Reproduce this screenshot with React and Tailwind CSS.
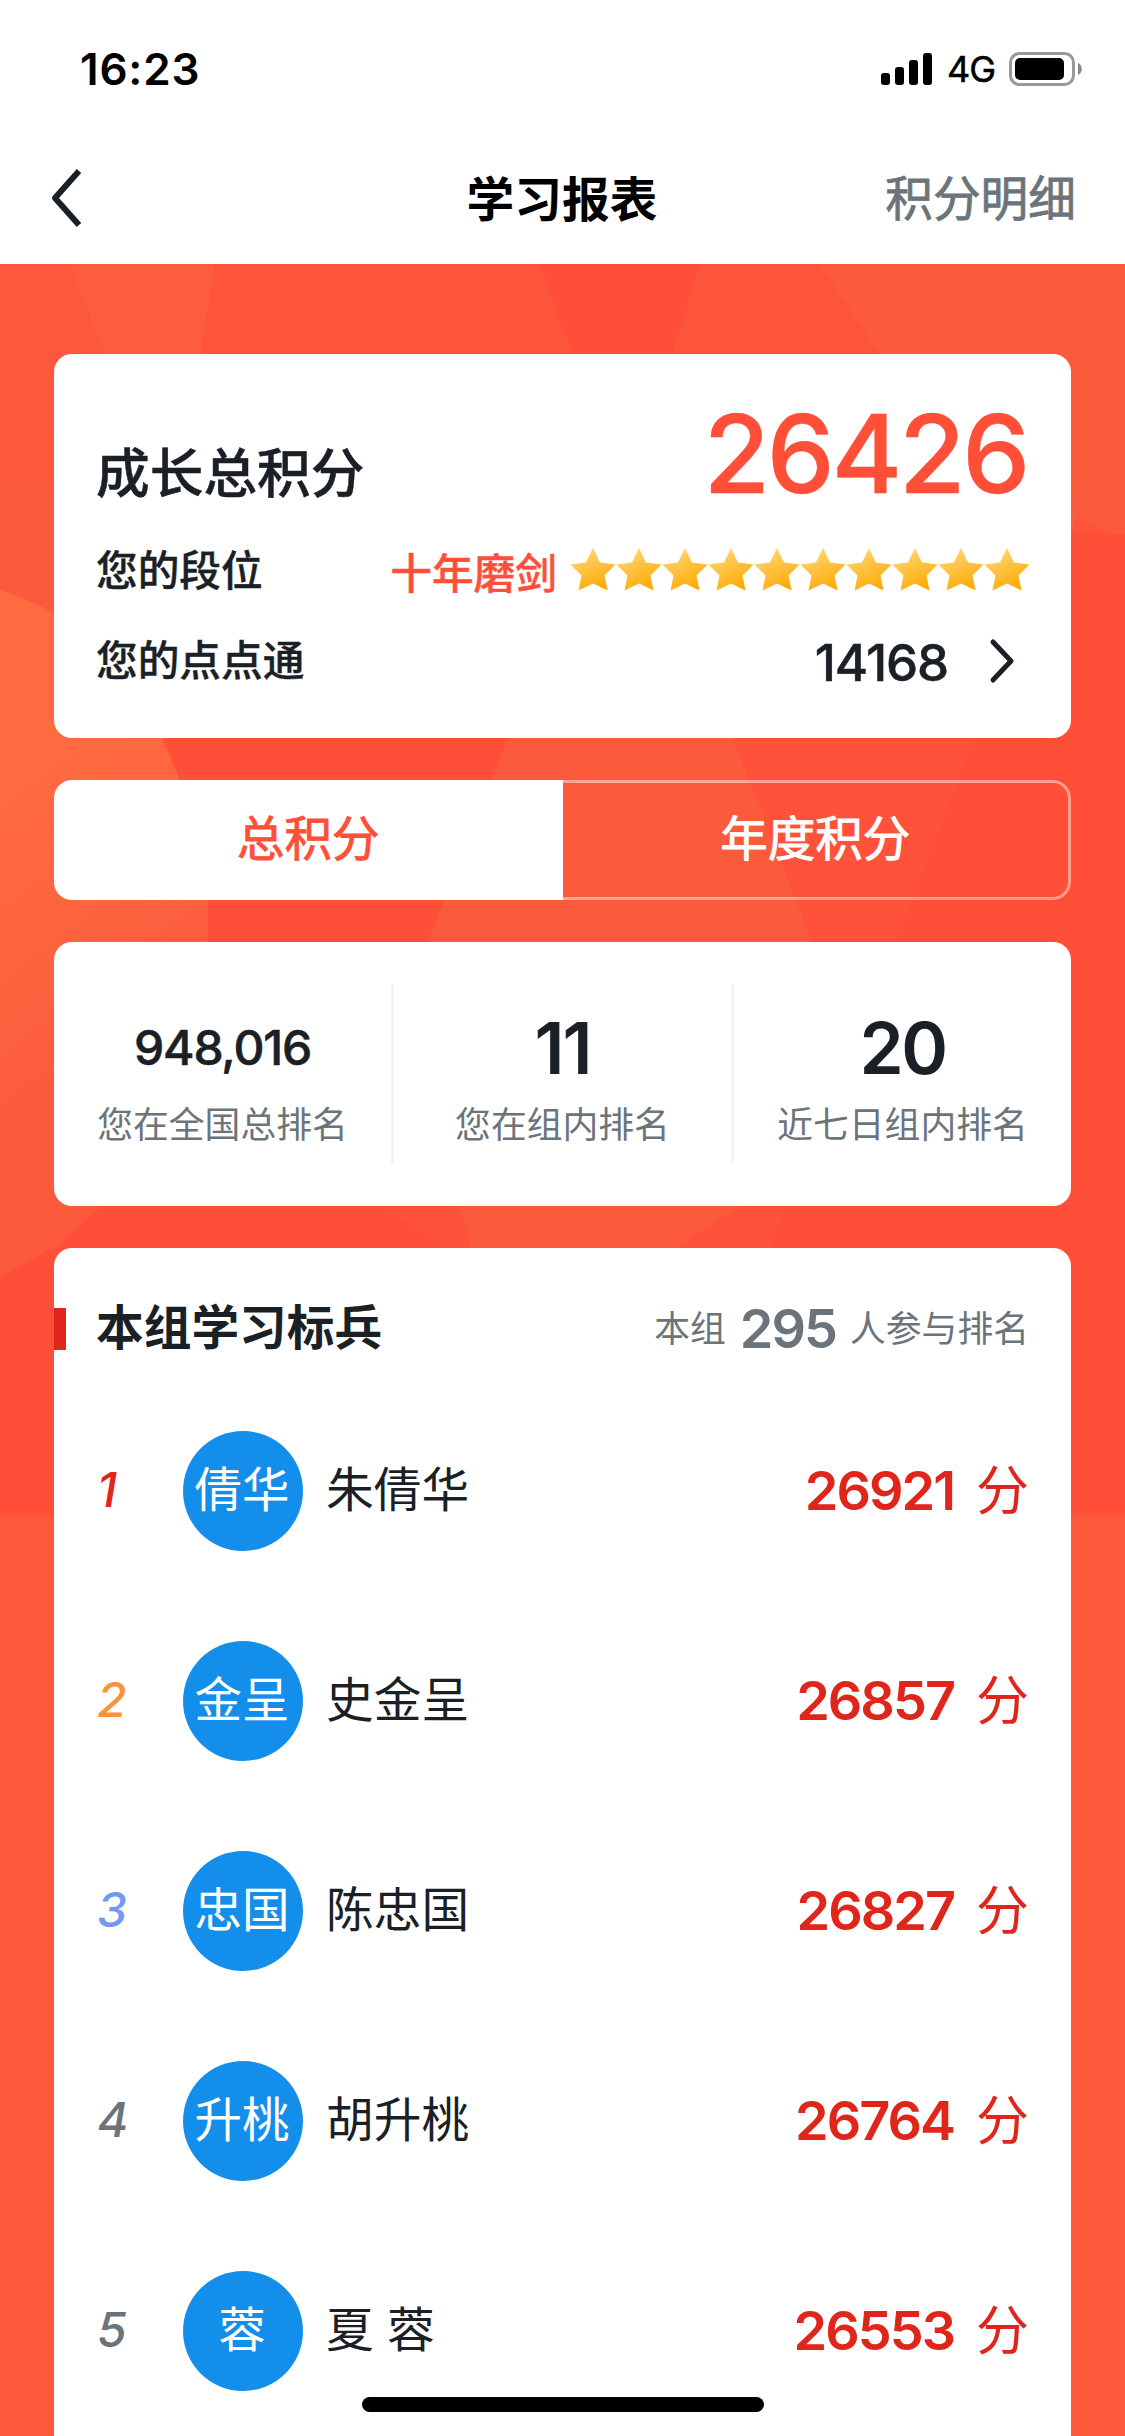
import React from "react";

const FONT = "font-['Inter','Noto_Sans_CJK_SC',sans-serif]";

const people = [
  { rank: 1, color: "text-[#e0251b]", short: "倩华", name: "朱倩华", score: "26921" },
  { rank: 2, color: "text-[#fb9438]", short: "金呈", name: "史金呈", score: "26857" },
  { rank: 3, color: "text-[#7399f2]", short: "忠国", name: "陈忠国", score: "26827" },
  { rank: 4, color: "text-[#6b747b]", short: "升桃", name: "胡升桃", score: "26764" },
  { rank: 5, color: "text-[#6b747b]", short: "蓉", name: "夏 蓉", score: "26553" },
];

const stats = [
  { value: "948,016", label: "您在全国总排名", size: "text-[48px] font-medium tracking-[-1.2px] [-webkit-text-stroke:0.6px]" },
  { value: "11", label: "您在组内排名", size: "text-[71px] font-semibold tracking-[-2px]" },
  { value: "20", label: "近七日组内排名", size: "text-[71px] font-semibold tracking-[-2.5px]" },
];

function StatusBar() {
  return (
    <div className="flex h-[132px] items-center justify-between pl-[80px] pr-[43px] pt-[6px] text-black">
      <div className="text-[44px] font-semibold leading-[52px] tracking-[0.8px]">16:23</div>
      <div className="flex items-center">
        <svg width="52" height="33" viewBox="0 0 52 33">
          <rect x="0" y="20" width="9" height="12" rx="3" />
          <rect x="14" y="14" width="9" height="18" rx="3" />
          <rect x="28" y="7" width="9" height="25" rx="3" />
          <rect x="42" y="0" width="9" height="32" rx="3" />
        </svg>
        <span className="ml-[14px] text-[36px] leading-[40px] tracking-[-1px] [-webkit-text-stroke:0.5px]">4G</span>
        <svg className="ml-[14px]" width="73" height="34" viewBox="0 0 73 34">
          <rect x="1.5" y="1.5" width="63" height="31" rx="9" fill="none" stroke="#999" strokeWidth="3" />
          <rect x="6" y="6" width="49" height="22" rx="5" />
          <path d="M69 11c5 2 5 10 0 12z" fill="#888" />
        </svg>
      </div>
    </div>
  );
}

function NavBar() {
  return (
    <div className="grid h-[132px] grid-cols-3 items-center pl-[48px] pr-[49px]">
      <svg width="34" height="60" viewBox="0 0 34 60" fill="none" stroke="#1b1f26" strokeWidth="6" strokeLinejoin="round">
        <path d="M31 3L7 30L31 57" />
      </svg>
      <h1 className="pt-[3px] text-center text-[47.7px] font-bold leading-[60px] text-black">学习报表</h1>
      <div className="pt-[2px] text-right text-[47.7px] leading-[60px] text-[#6b747b] [-webkit-text-stroke:0.8px]">积分明细</div>
    </div>
  );
}

function Star() {
  return (
    <svg width="46" height="44" viewBox="0 0 46 44">
      <path d="M23 0L30 14.500L45.500 16.500L34.500 27.500L37.500 42.500L23 35.500L8.500 42.500L11.500 27.500L.5 16.500L16 14.500Z" fill="url(#gold)" />
    </svg>
  );
}

function Backdrop() {
  return (
    <svg className="absolute inset-0" width="1125" height="2172" viewBox="0 264 1125 2172" preserveAspectRatio="none">
      <defs>
        <linearGradient id="gold" x1="0.2" y1="0" x2="0.7" y2="1">
          <stop offset="0" stopColor="#ffd97c" />
          <stop offset="1" stopColor="#ffa800" />
        </linearGradient>
        <linearGradient id="edge" gradientUnits="userSpaceOnUse" x1="0" y1="780" x2="170" y2="1000">
          <stop offset="0" stopColor="#ff6a40" />
          <stop offset="0.5" stopColor="#fe653f" />
          <stop offset="1" stopColor="#fb5b3c" />
        </linearGradient>
        <linearGradient id="side" x1="0" y1="0" x2="0" y2="1">
          <stop offset="0" stopColor="#fe573b" />
          <stop offset="1" stopColor="#fa5c3d" />
        </linearGradient>
      </defs>
      <rect y="264" width="1125" height="1251" fill="#ff4f38" />
      <rect y="1515" width="1125" height="921" fill="#ff573a" />
      <path d="M200 264H540L572 354L560 500L200 500Z" fill="#fe543a" />
      <path d="M0 264H120V700H0Z" fill="url(#side)" />
      <path d="M700 264L672 354L800 500L1071 534H1125V264Z" fill="#fd543a" />
      <path d="M70 264H215L200 354V480H150L105 354Z" fill="#fc5d3d" />
      <path d="M820 264H1125V380L1071 534L880 354Z" fill="#fc5c3c" />
      <path d="M1125 380L1071 510Q1095 532 1125 534Z" fill="#fb5a3c" />
      <path d="M733 738H975L895 942H812Z" fill="#fe523a" />
      <path d="M508 738H733L812 942H428Z" fill="#fb5a3c" />
      <path d="M383 1206H783L770 1250H450Z" fill="#fd533a" />
      <path d="M460 1206H740L672 1250H472Z" fill="#fb5a3c" />
      <path d="M0 590Q40 602 80 630L162 738L180 780L208 880V1000L100 1206L60 1244L0 1277Z" fill="url(#edge)" />
    </svg>
  );
}

function TotalCard() {
  return (
    <section className="h-[384px] rounded-[18px] bg-white px-[42px] pt-[44px] text-[#1b1f26]">
      <div className="flex h-[128px] items-start justify-between">
        <div className="pt-[43px] text-[53.7px] font-medium leading-[66px] [-webkit-text-stroke:0.5px]">成长总积分</div>
        <div className="mr-[2px] text-[108px] font-medium leading-[112px] tracking-[-3.3px] text-[#ff4f38] [-webkit-text-stroke:0.4px]">26426</div>
      </div>
      <div className="flex h-[90px] items-center justify-between">
        <div className="text-[41.7px] font-medium leading-[50px] [-webkit-text-stroke:0.4px]">您的段位</div>
        <div className="flex items-center">
          <span className="pt-[6px] text-[41.7px] font-medium leading-[50px] text-[#ff4f38] [-webkit-text-stroke:0.4px]">十年磨剑</span>
          <span className="-mt-[2px] ml-[13px] mr-[-1px] flex">
            {Array.from({ length: 10 }, (_, i) => <Star key={i} />)}
          </span>
        </div>
      </div>
      <div className="flex h-[90px] items-center justify-between">
        <div className="text-[41.7px] font-medium leading-[50px] [-webkit-text-stroke:0.4px]">您的点点通</div>
        <div className="flex items-center">
          <span className="pt-[4px] text-[51px] font-medium leading-[56px] tracking-[-1.1px] [-webkit-text-stroke:0.5px]">14168</span>
          <svg className="ml-[40px] mr-[13px]" width="28" height="46" viewBox="0 0 28 46" fill="none" stroke="#1b1f26" strokeWidth="5" strokeLinecap="round" strokeLinejoin="round">
            <path d="M5 4L23 23L5 42" />
          </svg>
        </div>
      </div>
    </section>
  );
}

function Tabs() {
  return (
    <div className="mt-[42px] grid h-[120px] grid-cols-2 overflow-hidden rounded-[18px] text-[47.5px] leading-[60px] [-webkit-text-stroke:0.9px]">
      <div className="flex items-center justify-center bg-white pb-[3px] text-[#ff4f38]">总积分</div>
      <div className="flex items-center justify-center rounded-r-[18px] border-[3px] border-l-0 border-white/45 pb-[3px] text-white">年度积分</div>
    </div>
  );
}

function Stats() {
  return (
    <section className="mt-[42px] grid h-[264px] grid-cols-[340px_340px_337px] items-center rounded-[18px] bg-white">
      {stats.map((s, i) => (
        <div key={s.label} className={"flex h-[180px] flex-col items-center text-[#1b1f26] " + (i < 2 ? "border-r-[3px] border-[#f2f3f4]" : "")}>
          <div className={"flex h-[116px] items-start pt-[21px] leading-[86px] " + s.size}>{s.value}</div>
          <div className="text-[35.8px] leading-[50px] text-[#6b747b]">{s.label}</div>
        </div>
      ))}
    </section>
  );
}

function Row({ p }) {
  return (
    <li className="flex h-[210px] items-start px-[42px]">
      <div className="flex h-[120px] w-full items-center">
        <div className={"w-[87px] pb-[2px] pl-[1px] text-[48px] font-medium italic leading-[60px] " + p.color}>{p.rank}</div>
        <div className="flex h-[120px] w-[120px] items-center justify-center rounded-full bg-[#148eeb] pb-[3px] pr-[2px] text-[47.5px] leading-[60px] text-white">{p.short}</div>
        <div className="ml-[23px] flex-1 pb-[3px] text-[47.7px] leading-[60px] text-[#1b1f26]">{p.name}</div>
        <div className="flex items-center text-[#e0251b]">
          <span className="text-[54px] font-semibold leading-[60px] tracking-[-2px]">{p.score}</span>
          <span className="ml-[22px] text-[53px] leading-[60px]">分</span>
        </div>
      </div>
    </li>
  );
}

function Leaders() {
  return (
    <section className="mt-[42px] h-[1188px] overflow-hidden rounded-t-[18px] bg-white">
      <div className="flex h-[183px] items-start pt-[48px]">
        <div className="mt-[12px] h-[42px] w-[12px] bg-[#e0251b]" />
        <h2 className="ml-[30px] flex-1 pt-[1px] text-[47.7px] font-bold leading-[62px] text-[#1b1f26]">本组学习标兵</h2>
        <div className="flex items-center pr-[42px] pt-[2px] text-[35.8px] leading-[62px] text-[#6b747b]">
          <span>本组</span>
          <span className="mx-[14px] text-[54px] font-semibold tracking-[-2px]">295</span>
          <span>人参与排名</span>
        </div>
      </div>
      <ul>
        {people.map((p) => <Row key={p.rank} p={p} />)}
      </ul>
    </section>
  );
}

export default function App() {
  return (
    <div className={"relative h-[2436px] w-[1125px] overflow-hidden bg-white " + FONT}>
      <StatusBar />
      <NavBar />
      <main className="relative h-[2172px] overflow-hidden bg-[#ff573a]">
        <Backdrop />
        <div className="relative px-[54px] pt-[90px]">
          <TotalCard />
          <Tabs />
          <Stats />
          <Leaders />
        </div>
      </main>
      <div className="absolute bottom-[24px] left-[362px] h-[15px] w-[402px] rounded-full bg-black" />
    </div>
  );
}
